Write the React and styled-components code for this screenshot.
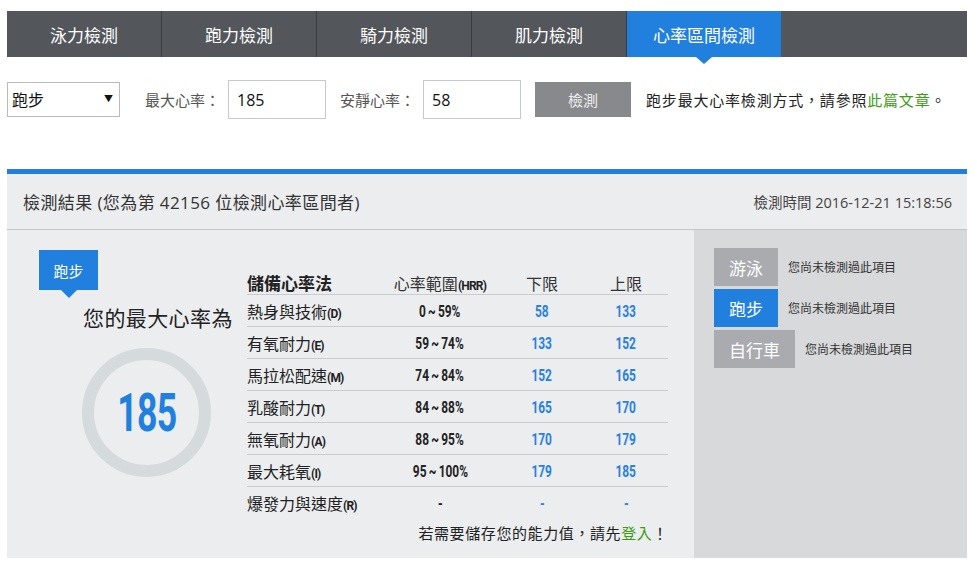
import React from "react";
import styled, { createGlobalStyle } from "styled-components";

const Global = createGlobalStyle`
  html, body { margin: 0; padding: 0; background: #fff; }
  body { font-family: "Open Sans", "Noto Sans CJK TC", sans-serif; color: #222; }
  * { box-sizing: border-box; }
`;

const CJK = `"Open Sans", "Noto Sans CJK TC", sans-serif`;
const NARROW = `"Roboto", "Open Sans", sans-serif`;

const Page = styled.div`
  width: 960px;
  margin: 11px 0 0 7px;
`;

const TabBar = styled.nav`
  display: flex;
  height: 46px;
  background: #53565b;
`;

const Tab = styled.div`
  position: relative;
  width: ${(p) => (p.$wide ? 154 : 155)}px;
  display: flex;
  align-items: center;
  justify-content: center;
  font-family: ${CJK};
  font-size: 17px;
  color: #fff;
  background: ${(p) => (p.$active ? "#2180de" : "transparent")};
  border-right: ${(p) => (p.$active ? "none" : "1px solid #3a3d41")};
  &::after {
    content: "";
    display: ${(p) => (p.$active ? "block" : "none")};
    position: absolute;
    left: 50%;
    bottom: -7px;
    margin-left: -8px;
    border-left: 8px solid transparent;
    border-right: 8px solid transparent;
    border-top: 7px solid #2180de;
  }
`;

const FormRow = styled.div`
  display: flex;
  align-items: center;
  margin-top: 23px;
  height: 39px;
  font-family: ${CJK};
`;

const SelectWrap = styled.div`
  position: relative;
  width: 113px;
  height: 35px;
`;

const Select = styled.select`
  appearance: none;
  width: 100%;
  height: 100%;
  border: 1px solid #b9bbbf;
  background: #fff;
  font-family: ${CJK};
  font-size: 16px;
  color: #111;
  padding: 0 0 0 4px;
  border-radius: 0;
`;

const Caret = styled.span`
  position: absolute;
  right: 7px;
  top: 10px;
  font-size: 9px;
  color: #111;
  pointer-events: none;
`;

const Label = styled.span`
  font-size: 15px;
  color: #555;
  margin-left: ${(p) => p.$ml}px;
  margin-right: 8px;
  white-space: nowrap;
`;

const Input = styled.input`
  width: 98px;
  height: 39px;
  border: 1px solid #c8c9cc;
  padding: 0 8px;
  font-family: ${CJK};
  font-size: 16px;
  color: #111;
  outline: none;
`;

const Button = styled.button`
  margin-left: 14px;
  width: 96px;
  height: 35px;
  border: none;
  background: #88898d;
  color: #eee;
  font-family: ${CJK};
  font-size: 15px;
`;

const Hint = styled.span`
  margin-left: 15px;
  font-size: 15px;
  color: #222;
  letter-spacing: 0.8px;
  white-space: nowrap;
`;

const Green = styled.span`
  color: #3d9d12;
`;

const Result = styled.section`
  margin-top: 50px;
  border-top: 5px solid #2180de;
`;

const ResultHead = styled.header`
  display: flex;
  align-items: center;
  justify-content: space-between;
  height: 56px;
  padding: 0 15px 1px 16px;
  background: #ecedef;
  border-bottom: 1px solid #c4c6ca;
`;

const ResultTitle = styled.div`
  font-size: 17px;
  letter-spacing: 0.4px;
  color: #333;
`;

const ResultTime = styled.div`
  font-size: 14.5px;
  color: #444;
`;

const ResultBody = styled.div`
  display: flex;
  height: 328px;
`;

const LeftPane = styled.div`
  width: 687px;
  background: #ebedef;
  display: flex;
`;

const Summary = styled.div`
  width: 240px;
  padding-top: 20px;
`;

const Badge = styled.div`
  position: relative;
  margin-left: 32px;
  width: 59px;
  height: 40px;
  background: #2180de;
  color: #fff;
  font-size: 15px;
  display: flex;
  align-items: center;
  justify-content: center;
  &::after {
    content: "";
    position: absolute;
    left: 50%;
    bottom: -8px;
    margin-left: -8px;
    border-left: 8px solid transparent;
    border-right: 8px solid transparent;
    border-top: 8px solid #2180de;
  }
`;

const SummaryTitle = styled.div`
  margin-top: 16px;
  padding-left: 76px;
  font-size: 21px;
  line-height: 24px;
  color: #222;
  letter-spacing: 0.4px;
  white-space: nowrap;
`;

const Ring = styled.div`
  margin: 18px 0 0 75px;
  width: 129px;
  height: 129px;
  border: 12px solid #d5dadc;
  border-radius: 50%;
  display: flex;
  align-items: center;
  justify-content: center;
`;

const BigNum = styled.span`
  display: inline-block;
  font-family: ${NARROW};
  font-weight: 700;
  font-size: 54px;
  line-height: 1;
  color: #2180de;
  transform: scaleX(0.66);
  letter-spacing: -1px;
`;

const TableWrap = styled.div`
  width: 421px;
  padding-top: 40px;
`;

const Row = styled.div`
  display: grid;
  grid-template-columns: 133px 120px 84px 84px;
  align-items: center;
  height: ${(p) => (p.$head ? 25 : 32)}px;
  border-bottom: ${(p) => (p.$last ? "none" : "1px solid #c9cbce")};
`;

const NameCell = styled.div`
  font-size: ${(p) => (p.$head ? 17 : 16)}px;
  font-weight: ${(p) => (p.$head ? 700 : 400)};
  color: #222;
  white-space: nowrap;
`;

const HeadCell = styled.div`
  text-align: center;
  font-size: 16px;
  color: #333;
  white-space: nowrap;
`;

const Tag = styled.span`
  font-family: ${NARROW};
  font-weight: 700;
  font-size: 12px;
  letter-spacing: -0.8px;
  color: #222;
`;

const NumCell = styled.div`
  text-align: center;
`;

const Num = styled.span`
  display: inline-block;
  font-family: ${NARROW};
  font-weight: 700;
  font-size: 17px;
  word-spacing: -1px;
  transform: scaleX(0.7);
  color: ${(p) => (p.$blue ? "#2a80e0" : "#222")};
`;

const Note = styled.div`
  margin-top: 4px;
  text-align: right;
  font-size: 15px;
  line-height: 20px;
  color: #222;
  letter-spacing: 0.6px;
`;

const RightPane = styled.div`
  flex: 1;
  background: #d8d9db;
  padding: 18px 0 0 20px;
  display: flex;
  flex-direction: column;
  gap: 3px;
`;

const SportRow = styled.div`
  display: flex;
  align-items: center;
`;

const SportBtn = styled.div`
  height: 38px;
  padding: 0 15px;
  display: flex;
  align-items: center;
  background: ${(p) => (p.$active ? "#2180de" : "#a9abaf")};
  color: #fff;
  font-size: 17px;
`;

const SportNote = styled.span`
  margin-left: 10px;
  font-size: 12px;
  color: #333;
`;

const tabs = ["泳力檢測", "跑力檢測", "騎力檢測", "肌力檢測", "心率區間檢測"];

const rows = [
  ["熱身與技術", "(D)", "0 ~ 59%", "58", "133"],
  ["有氧耐力", "(E)", "59 ~ 74%", "133", "152"],
  ["馬拉松配速", "(M)", "74 ~ 84%", "152", "165"],
  ["乳酸耐力", "(T)", "84 ~ 88%", "165", "170"],
  ["無氧耐力", "(A)", "88 ~ 95%", "170", "179"],
  ["最大耗氧", "(I)", "95 ~ 100%", "179", "185"],
  ["爆發力與速度", "(R)", "-", "-", "-"],
];

const sports = [
  ["游泳", false],
  ["跑步", true],
  ["自行車", false],
];

export default function App() {
  return (
    <>
      <Global />
      <Page>
        <TabBar>
          {tabs.map((t, i) => (
            <Tab key={t} $active={i === 4} $wide={i === 4}>
              {t}
            </Tab>
          ))}
        </TabBar>

        <FormRow>
          <SelectWrap>
            <Select defaultValue="run">
              <option value="run">跑步</option>
              <option value="swim">游泳</option>
              <option value="bike">自行車</option>
            </Select>
            <Caret>▼</Caret>
          </SelectWrap>
          <Label $ml={25}>最大心率：</Label>
          <Input defaultValue="185" />
          <Label $ml={14}>安靜心率：</Label>
          <Input defaultValue="58" />
          <Button>檢測</Button>
          <Hint>
            跑步最大心率檢測方式，請參照<Green>此篇文章</Green>。
          </Hint>
        </FormRow>

        <Result>
          <ResultHead>
            <ResultTitle>檢測結果 (您為第 42156 位檢測心率區間者)</ResultTitle>
            <ResultTime>檢測時間 2016-12-21 15:18:56</ResultTime>
          </ResultHead>
          <ResultBody>
            <LeftPane>
              <Summary>
                <Badge>跑步</Badge>
                <SummaryTitle>您的最大心率為</SummaryTitle>
                <Ring>
                  <BigNum>185</BigNum>
                </Ring>
              </Summary>
              <TableWrap>
                <Row $head>
                  <NameCell $head>儲備心率法</NameCell>
                  <HeadCell>
                    心率範圍<Tag>(HRR)</Tag>
                  </HeadCell>
                  <HeadCell>下限</HeadCell>
                  <HeadCell>上限</HeadCell>
                </Row>
                {rows.map((r, i) => (
                  <Row key={r[0]} $last={i === rows.length - 1}>
                    <NameCell>
                      {r[0]}
                      <Tag>{r[1]}</Tag>
                    </NameCell>
                    <NumCell>
                      <Num>{r[2]}</Num>
                    </NumCell>
                    <NumCell>
                      <Num $blue>{r[3]}</Num>
                    </NumCell>
                    <NumCell>
                      <Num $blue>{r[4]}</Num>
                    </NumCell>
                  </Row>
                ))}
                <Note>
                  若需要儲存您的能力值，請先<Green>登入</Green>！
                </Note>
              </TableWrap>
            </LeftPane>
            <RightPane>
              {sports.map(([s, a]) => (
                <SportRow key={s}>
                  <SportBtn $active={a}>{s}</SportBtn>
                  <SportNote>您尚未檢測過此項目</SportNote>
                </SportRow>
              ))}
            </RightPane>
          </ResultBody>
        </Result>
      </Page>
    </>
  );
}
